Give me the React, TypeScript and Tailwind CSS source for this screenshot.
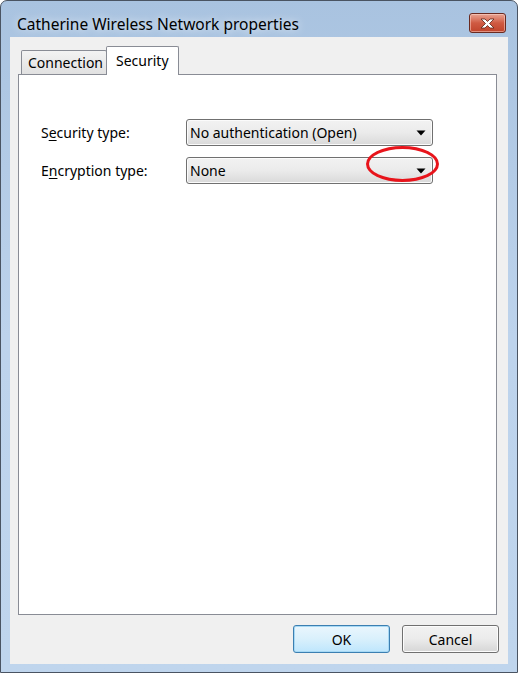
import React from "react";

const font = { fontFamily: '"Noto Sans", "Open Sans", sans-serif' };

const Combo = ({ value }: { value: string }) => (
  <div className="flex h-[27px] w-[247px] items-center justify-between rounded-[3px] border border-[#707070] bg-gradient-to-b from-[#f2f2f2] via-[#ebebeb] to-[#d9d9d9] pl-[3px] pr-[6px] text-[14px] text-black shadow-[inset_0_0_0_1px_#fbfbfb]">
    <span>{value}</span>
    <svg width="10" height="6" viewBox="0 0 10 6">
      <path d="M0.5 0.5 H9.5 L5 5.5 Z" fill="#000" />
    </svg>
  </div>
);

const Button = ({ label, focused }: { label: string; focused?: boolean }) => (
  <button
    className={
      "flex h-[28px] w-[97px] items-center justify-center rounded-[3px] border text-[14px] text-black " +
      (focused
        ? "border-[#3c7fb1] bg-gradient-to-b from-[#eaf6fd] via-[#d9f0fc] to-[#bee6fd] shadow-[inset_0_0_0_1px_#a7d9f5]"
        : "border-[#707070] bg-gradient-to-b from-[#f2f2f2] via-[#ebebeb] to-[#d6d6d6] shadow-[inset_0_0_0_1px_#fcfcfc]")
    }
  >
    {label}
  </button>
);

export default function App() {
  return (
    <div className="h-[674px] w-[519px] bg-white" style={font}>
      <div className="flex h-[673px] w-[518px] flex-col rounded-t-[7px] border border-[#4a5462] bg-gradient-to-b from-[#a9c3e0] via-[#bdd3ec] to-[#bfd5ed] px-[9px] pb-[8px]">
        {/* title bar */}
        <div className="flex h-[36px] items-start justify-between">
          <div className="pl-[7px] pt-[13px] text-[15.5px] leading-[20px] text-black [text-shadow:0_0_8px_rgba(255,255,255,0.9)]">
            Catherine Wireless Network properties
          </div>
          <div className="mr-[2px] mt-[12px] flex h-[20px] w-[37px] items-center justify-center rounded-[3px] border border-[#6a2a20] bg-gradient-to-b from-[#e8a493] via-[#cf5a42] to-[#c0442b] shadow-[inset_0_0_0_1px_rgba(255,220,210,0.5)]">
            <svg width="17" height="11" viewBox="0 0 17 11">
              <path
                d="M2 1 H6 L8.5 3.5 L11 1 H15 L10.5 5.5 L15 10 H11 L8.5 7.5 L6 10 H2 L6.5 5.5 Z"
                fill="#fff"
                stroke="#5a2318"
                strokeWidth="0.8"
              />
            </svg>
          </div>
        </div>

        {/* client area */}
        <div className="flex flex-1 flex-col bg-[#f0f0f0] pl-[8px] pr-[9px] pt-[9px] pb-[11px]">
          <div className="flex h-[28px] items-end pl-[3px] text-[14px] text-black">
            <div className="flex h-[24px] w-[86px] items-center rounded-t-[2px] border border-b-0 border-[#898c95] bg-gradient-to-b from-[#f3f3f3] to-[#e1e1e1] pl-[6px]">
              Connection
            </div>
            <div className="relative z-10 -mb-px -ml-px flex h-[29px] w-[73px] items-center rounded-t-[2px] border border-b-0 border-[#898c95] bg-white pb-[2px] pl-[9px]">
              Security
            </div>
          </div>

          <div className="relative h-[541px] w-[479px] border border-[#898c95] bg-white pl-[22px] pt-[44px] text-[14px] text-black">
            <div className="flex flex-col gap-[11px]">
              <div className="flex items-center">
                <div className="w-[145px]">
                  S<span className="underline underline-offset-2">e</span>curity type:
                </div>
                <Combo value="No authentication (Open)" />
              </div>
              <div className="flex items-center">
                <div className="w-[145px]">
                  E<span className="underline underline-offset-2">n</span>cryption type:
                </div>
                <Combo value="None" />
              </div>
            </div>
            <div className="absolute left-[347px] top-[71px] h-[36px] w-[73px] rounded-[50%] border-[3px] border-[#e8141b]" />
          </div>

          <div className="mt-auto flex justify-end gap-[12px]">
            <Button label="OK" focused />
            <Button label="Cancel" />
          </div>
        </div>
      </div>
    </div>
  );
}
